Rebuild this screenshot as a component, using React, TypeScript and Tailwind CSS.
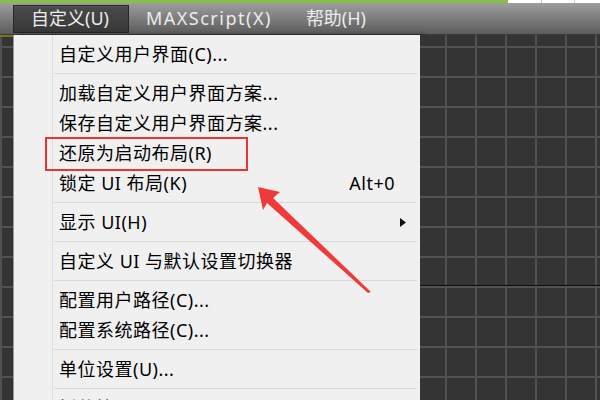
import React from "react";

type Row =
  | { kind: "item"; label: string; shortcut?: string; submenu?: boolean }
  | { kind: "sep" };

const rows: Row[] = [
  { kind: "item", label: "自定义用户界面(C)..." },
  { kind: "sep" },
  { kind: "item", label: "加载自定义用户界面方案..." },
  { kind: "item", label: "保存自定义用户界面方案..." },
  { kind: "item", label: "还原为启动布局(R)" },
  { kind: "item", label: "锁定 UI 布局(K)", shortcut: "Alt+0" },
  { kind: "sep" },
  { kind: "item", label: "显示 UI(H)", submenu: true },
  { kind: "sep" },
  { kind: "item", label: "自定义 UI 与默认设置切换器" },
  { kind: "sep" },
  { kind: "item", label: "配置用户路径(C)..." },
  { kind: "item", label: "配置系统路径(C)..." },
  { kind: "sep" },
  { kind: "item", label: "单位设置(U)..." },
  { kind: "sep" },
  { kind: "item", label: "插件管理器..." },
];

const grid =
  "bg-[#343434] bg-[linear-gradient(to_right,#525252_2px,transparent_2px),linear-gradient(to_bottom,#525252_2px,transparent_2px)] bg-[size:30px_30px]";

function MenuRow({ row }: { row: Row }) {
  if (row.kind === "sep") {
    return (
      <div className="py-[4px] pl-[1px] pr-[3px]">
        <div className="h-[1px] bg-[#d9d9d9]" />
      </div>
    );
  }
  return (
    <div className="flex h-[30px] shrink-0 items-center justify-between pl-[6px] text-[18px] tracking-[0.5px] text-black">
      <span className="whitespace-nowrap">{row.label}</span>
      {row.shortcut && <span className="pr-[25px]">{row.shortcut}</span>}
      {row.submenu && (
        <span className="pr-[14px]">
          <svg width="6" height="9" viewBox="0 0 6 9">
            <path d="M0 0 L6 4.5 L0 9 Z" fill="#111" />
          </svg>
        </span>
      )}
    </div>
  );
}

export default function App() {
  return (
    <div className="relative flex h-[400px] w-[600px] flex-col overflow-hidden bg-[#343434] font-[family-name:'Noto_Sans','Noto_Sans_CJK_SC',sans-serif]">
      {/* window top strip */}
      <div className="flex h-[3px] shrink-0">
        <div className="w-[508px] bg-[#86c046]" />
        <div className="w-[34px] border-r border-[#c8c8c8] bg-white" />
        <div className="w-[33px] border-r border-[#c8c8c8] bg-white" />
        <div className="flex-1 bg-white" />
      </div>

      {/* menu bar */}
      <div className="flex h-[32px] shrink-0 items-center border-b border-[#3a3a3a] bg-gradient-to-b from-[#9e9e9e] to-[#5c5c5c] pl-[13px] text-[18px] text-[#ececec]">
        <div className="flex h-[28px] items-center border border-[#262626] bg-gradient-to-b from-[#4a4a4a] to-[#383838] pl-[17px] pr-[19px] shadow-[inset_0_1px_0_#5a5a5a]">
          自定义(U)
        </div>
        <div className="px-[17px] tracking-[1.5px]">MAXScript(X)</div>
        <div className="px-[17px]">帮助(H)</div>
      </div>

      {/* body */}
      <div className="flex min-h-0 flex-1">
        <div className={`w-[13px] shrink-0 border-t-2 border-[#8a6d1e] ${grid} bg-[position:0px_9px]`} />

        <div className="flex w-[407px] shrink-0 border-l border-[#9a9a9a] bg-[#f0f0f0] shadow-[4px_0_4px_rgba(0,0,0,0.55)]">
          <div className="w-[39px] shrink-0 border-r border-[#dcdcdc]" />
          <div className="flex flex-1 flex-col pt-[4px]">
            {rows.map((row, i) => (
              <MenuRow key={i} row={row} />
            ))}
          </div>
        </div>

        <div className="flex flex-1 flex-col">
          <div className={`h-[250px] shrink-0 ${grid} bg-[position:25px_11px]`} />
          <div className="h-[1px] shrink-0 bg-[#0c0c0c]" />
          <div className={`flex-1 ${grid} bg-[position:25px_0px]`} />
        </div>
      </div>

      {/* annotation: red box */}
      <div className="absolute left-[45px] top-[137px] h-[34px] w-[203px] border-2 border-[#ea3333]" />

      {/* annotation: arrow */}
      <svg className="absolute left-0 top-0" width="600" height="400" viewBox="0 0 600 400">
        <polygon
          points="258,187 280,192 273,198 371,292 368,293 267,203 263,210"
          fill="#f03a3a"
        />
      </svg>
    </div>
  );
}
